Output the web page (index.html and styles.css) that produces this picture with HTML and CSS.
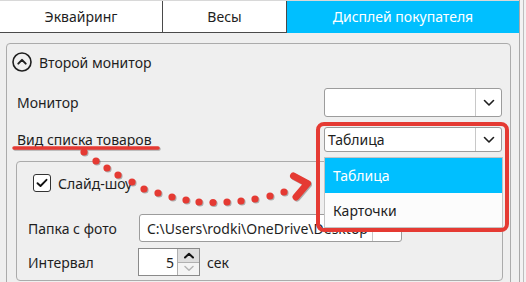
FILE: index.html
```html
<!DOCTYPE html>
<html lang="ru">
<head>
<meta charset="utf-8">
<link rel="stylesheet" href="styles.css">
</head>
<body>
<div class="window">
  <div class="main">
    <div class="tabs">
      <div class="tab t1">Эквайринг</div>
      <div class="tab t2">Весы</div>
      <div class="tab active">Дисплей покупателя</div>
    </div>
    <div class="panel">
      <div class="group outer">
        <div class="exp-head">
          <span class="exp-icon"><svg width="20" height="20" viewBox="0 0 20 20"><circle cx="10" cy="10" r="9" fill="none" stroke="#1e1e1e" stroke-width="1.6"/><path d="M6.3 11.6 L10 7.9 L13.7 11.6" fill="none" stroke="#1e1e1e" stroke-width="2" stroke-linecap="round" stroke-linejoin="round"/></svg></span>
          <span class="exp-title">Второй монитор</span>
        </div>
        <div class="row r1">
          <span class="label">Монитор</span>
          <div class="combo tall">
            <div class="combo-text"></div>
            <div class="combo-btn"><svg width="12" height="8" viewBox="0 0 12 8"><path d="M1.5 1.5 L6 6 L10.5 1.5" fill="none" stroke="#1e1e1e" stroke-width="1.6" stroke-linecap="round" stroke-linejoin="round"/></svg></div>
          </div>
        </div>
        <div class="row r2">
          <span class="label">Вид списка товаров</span>
          <div class="combo open">
            <div class="combo-text">Таблица</div>
            <div class="combo-btn"><svg width="12" height="8" viewBox="0 0 12 8"><path d="M1.5 1.5 L6 6 L10.5 1.5" fill="none" stroke="#1e1e1e" stroke-width="1.6" stroke-linecap="round" stroke-linejoin="round"/></svg></div>
            <div class="popup">
              <div class="item selected">Таблица</div>
              <div class="item">Карточки</div>
            </div>
            <div class="highlight"></div>
          </div>
        </div>
        <div class="group inner">
          <div class="check-row">
            <span class="checkbox"><svg width="12" height="10" viewBox="0 0 12 10"><path d="M1.5 5.2 L4.5 8 L10.5 1.8" fill="none" stroke="#111" stroke-width="1.9" stroke-linecap="round" stroke-linejoin="round"/></svg></span>
            <span class="check-text">Слайд-шоу</span>
          </div>
          <div class="row r3">
            <span class="label wide">Папка с фото</span>
            <div class="textbox"><span class="tb-text">C:\Users\rodki\OneDrive\Desktop</span><span class="browse"></span></div>
          </div>
          <div class="row r4">
            <span class="label wide">Интервал</span>
            <div class="spin">
              <span class="num">5</span>
              <span class="spin-btns">
                <span class="sb up"><svg width="12" height="7" viewBox="0 0 12 7"><path d="M2 5.5 L6 1.8 L10 5.5" fill="none" stroke="#111" stroke-width="2" stroke-linecap="round" stroke-linejoin="round"/></svg></span>
                <span class="sb down"><svg width="12" height="7" viewBox="0 0 12 7"><path d="M2 1.5 L6 5.2 L10 1.5" fill="none" stroke="#b5b5b5" stroke-width="1.5" stroke-linecap="round" stroke-linejoin="round"/></svg></span>
              </span>
            </div>
            <span class="unit">сек</span>
          </div>
        </div>
      </div>
    </div>
  </div>
  <div class="edge"><div class="edge-line"></div></div>
  <svg class="annot" width="526" height="282" viewBox="0 0 526 282">
    <g fill="#e53a33">
      <line x1="14" y1="148" x2="158" y2="148" stroke="#e53a33" stroke-width="3.5" stroke-linecap="round"/>
      <circle cx="84" cy="152" r="3.6"/>
      <circle cx="96" cy="161" r="3.6"/>
      <circle cx="107" cy="168" r="3.6"/>
      <circle cx="118" cy="175" r="3.6"/>
      <circle cx="132" cy="182" r="3.6"/>
      <circle cx="144" cy="189" r="3.6"/>
      <circle cx="158" cy="193" r="3.6"/>
      <circle cx="172" cy="197" r="3.6"/>
      <circle cx="186" cy="200" r="3.6"/>
      <circle cx="199" cy="202" r="3.6"/>
      <circle cx="213" cy="202.5" r="3.6"/>
      <circle cx="227" cy="202" r="3.6"/>
      <circle cx="241" cy="201" r="3.6"/>
      <circle cx="255" cy="199" r="3.6"/>
      <circle cx="270" cy="196" r="3.6"/>
      <circle cx="284" cy="192" r="3.6"/>
      <path d="M293.5 176 L307.5 183.5 L296 197" fill="none" stroke="#e53a33" stroke-width="7" stroke-linecap="round" stroke-linejoin="round"/>
    </g>
  </svg>
</div>
</body>
</html>
```

FILE: styles.css
```css
html, body {
  margin: 0;
  padding: 0;
}
body {
  width: 526px;
  height: 282px;
  overflow: hidden;
  background: #efefef;
  font-family: "Noto Sans", "Open Sans", sans-serif;
  font-size: 14px;
  color: #1e1e1e;
}
.window {
  position: relative;
  display: flex;
  width: 526px;
  height: 282px;
  overflow: hidden;
}
.main {
  width: 519px;
  flex: none;
  border-right: 1px solid #a8a8a8;
  display: flex;
  flex-direction: column;
}
.edge {
  flex: 1;
  background: #f2f2f2;
  position: relative;
}
.edge-line {
  margin-left: 3px;
  width: 1px;
  height: 100%;
  background: #bdbdbd;
}
.tabs {
  display: flex;
  flex: none;
  height: 33px;
  box-sizing: border-box;
  border-top: 1px solid #d8d8d8;
}
.tab {
  display: flex;
  align-items: center;
  justify-content: center;
  background: #fff;
  border-bottom: 1px solid #4a4a4a;
  box-sizing: border-box;
  padding-bottom: 1px;
}
.t1 {
  width: 163px;
  border-right: 1px solid #4a4a4a;
}
.t2 {
  width: 123px;
}
.tab.active {
  flex: 1;
  background: #00bfff;
  color: #fff;
  border-bottom: none;
  border-left: 1px solid #4a4a4a;
}
.panel {
  flex: 1;
  min-height: 0;
  padding: 10px 8px 0 6px;
  background: #efefef;
}
.group {
  border: 1px solid #ababab;
  border-radius: 4px;
}
.outer {
  padding: 8px 8px 20px 10px;
  height: 300px;
}
.exp-head {
  display: flex;
  align-items: center;
  height: 20px;
  margin-left: -5px;
}
.exp-icon {
  display: flex;
  width: 20px;
  height: 20px;
  margin-right: 7px;
}
.row {
  display: flex;
  align-items: center;
}
.r1 {
  margin-top: 16px;
  justify-content: space-between;
}
.r2 {
  margin-top: 10px;
  justify-content: space-between;
}
.combo {
  position: relative;
  display: flex;
  width: 178px;
  height: 25px;
  box-sizing: border-box;
  border: 1px solid #9c9c9c;
  border-radius: 3px;
  background: #fff;
}
.combo.tall {
  height: 29px;
}
.combo-text {
  flex: 1;
  display: flex;
  align-items: center;
  padding-left: 3px;
  border-right: 1px solid #c8c8c8;
}
.combo-btn {
  width: 25px;
  display: flex;
  align-items: center;
  justify-content: center;
}
.popup {
  position: absolute;
  left: -1px;
  top: 29px;
  width: 179px;
  height: 71px;
  box-sizing: border-box;
  background: #fcfcfc;
  border: 1px solid #c4c4c4;
  z-index: 3;
}
.item {
  height: 35px;
  display: flex;
  align-items: center;
  padding-left: 8px;
}
.item.selected {
  background: #00bfff;
  color: #fff;
}
.highlight {
  position: absolute;
  left: -9px;
  top: -6px;
  width: 193px;
  height: 110px;
  box-sizing: border-box;
  border: 4.5px solid #e53a33;
  border-radius: 8px;
  z-index: 4;
}
.inner {
  margin: 9px -1px 0 -1px;
  padding: 12px 10px 4px 11px;
  position: relative;
  z-index: 1;
}
.check-row {
  display: flex;
  align-items: center;
  height: 18px;
  margin-left: 5px;
}
.checkbox {
  width: 18px;
  height: 18px;
  box-sizing: border-box;
  border: 1px solid #333;
  border-radius: 3px;
  background: #fff;
  display: flex;
  align-items: center;
  justify-content: center;
  margin-right: 7px;
}
.label.wide {
  width: 111px;
  flex: none;
}
.r3 {
  margin-top: 22px;
}
.r4 {
  margin-top: 6px;
}
.textbox {
  display: flex;
  width: 263px;
  height: 28px;
  box-sizing: border-box;
  border: 1px solid #9c9c9c;
  border-radius: 3px;
  background: #fff;
  overflow: hidden;
}
.tb-text {
  flex: 1;
  padding-left: 7px;
  display: flex;
  align-items: center;
  white-space: nowrap;
  overflow: hidden;
}
.browse {
  width: 28px;
  border-left: 1px solid #c8c8c8;
}
.spin {
  display: flex;
  width: 62px;
  height: 28px;
  box-sizing: border-box;
  border: 1px solid #8a8a8a;
  background: #fff;
  margin-left: -1px;
}
.num {
  flex: 1;
  display: flex;
  align-items: center;
  justify-content: flex-end;
  padding-right: 3px;
}
.spin-btns {
  width: 21px;
  display: flex;
  flex-direction: column;
  border-left: 1px solid #b0b0b0;
}
.sb {
  flex: 1;
  display: flex;
  align-items: center;
  justify-content: center;
}
.sb.up {
  background: #dedede;
  border-bottom: 1px solid #b0b0b0;
}
.sb.down {
  background: #f4f4f4;
}
.unit {
  margin-left: 7px;
}
.annot {
  position: absolute;
  left: 0;
  top: 0;
  z-index: 10;
  pointer-events: none;
  filter: drop-shadow(1px 1.5px 0.6px rgba(0, 0, 0, 0.28));
}
```
